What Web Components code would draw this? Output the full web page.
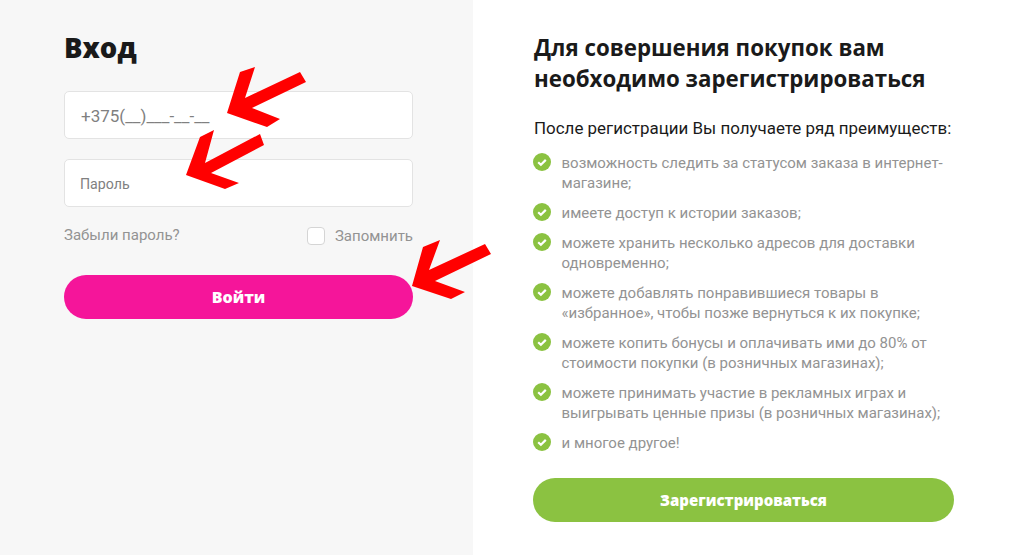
<!DOCTYPE html>
<html lang="ru">
<head>
<meta charset="utf-8">
<title>Вход</title>
<style>
html, body { margin: 0; padding: 0; background: #fff; }
body { font-family: Roboto, "Liberation Sans", sans-serif; width: 1015px; height: 555px; overflow: hidden; position: relative; }
</style>
</head>
<body>
<auth-page>
    <login-panel></login-panel>
    <register-panel>
        <benefit-item>возможность следить за статусом заказа в интернет-магазине;</benefit-item>
        <benefit-item>имеете доступ к истории заказов;</benefit-item>
        <benefit-item>можете хранить несколько адресов для доставки одновременно;</benefit-item>
        <benefit-item>можете добавлять понравившиеся товары в «избранное», чтобы позже вернуться к их покупке;</benefit-item>
        <benefit-item>можете копить бонусы и оплачивать ими до 80% от стоимости покупки (в розничных магазинах);</benefit-item>
        <benefit-item>можете принимать участие в рекламных играх и выигрывать ценные призы (в розничных магазинах);</benefit-item>
        <benefit-item>и многое другое!</benefit-item>
    </register-panel>
</auth-page>
<red-arrows></red-arrows>

<script>
class AuthPage extends HTMLElement {
    constructor() {
        super();
        this.attachShadow({ mode: "open" }).innerHTML = `
            <style>
                :host { display: flex; width: 1015px; height: 555px; }
            </style>
            <slot></slot>
        `;
    }
}

class PillButton extends HTMLElement {
    constructor() {
        super();
        this.attachShadow({ mode: "open" }).innerHTML = `
            <style>
                :host {
                    display: flex;
                    align-items: center;
                    justify-content: center;
                    box-sizing: border-box;
                    height: 44px;
                    border-radius: 22px;
                    background: var(--btn-color);
                    color: #fff;
                    font: 800 var(--btn-size, 15px)/1 "Open Sans", Roboto, sans-serif;
                }
            </style>
            <slot></slot>
        `;
    }
}

class TextField extends HTMLElement {
    constructor() {
        super();
        this.attachShadow({ mode: "open" }).innerHTML = `
            <style>
                :host {
                    display: flex;
                    align-items: center;
                    box-sizing: border-box;
                    height: 48px;
                    padding: 2px 16px 0;
                    background: #fff;
                    border: 1px solid #e3e3e3;
                    border-radius: 5px;
                    color: #808080;
                    font: 400 17px/1 Roboto, sans-serif;
                }
            </style>
            <slot></slot>
        `;
    }
}

class LoginPanel extends HTMLElement {
    constructor() {
        super();
        this.attachShadow({ mode: "open" }).innerHTML = `
            <style>
                :host {
                    display: flex;
                    flex-direction: column;
                    box-sizing: border-box;
                    width: 473px;
                    height: 555px;
                    padding: 30px 60px 0 64px;
                    background: #f7f7f7;
                }
                h1 {
                    margin: 0 0 25px;
                    font: 800 27.5px/36px "Open Sans", Roboto, sans-serif;
                    color: #1a1a1a;
                }
                .fields { display: flex; flex-direction: column; gap: 20px; }
                .options {
                    display: flex;
                    justify-content: space-between;
                    align-items: center;
                    height: 20px;
                    margin: 19px 0 29px;
                    color: #939393;
                    font-size: 15px;
                    font-family: Roboto, sans-serif;
                }
                .forgot { position: relative; top: -1px; }
                .remember { display: flex; align-items: center; gap: 10px; }
                .box {
                    width: 16px;
                    height: 16px;
                    background: #fff;
                    border: 1px solid #d5d5d5;
                    border-radius: 4px;
                }
                pill-button { --btn-color: #f5159a; --btn-size: 16px; }
            </style>
            <h1>Вход</h1>
            <div class="fields">
                <text-field>+375(__)___-__-__</text-field>
                <text-field style="font-size:14.2px;padding-left:15px">Пароль</text-field>
            </div>
            <div class="options">
                <span class="forgot">Забыли пароль?</span>
                <span class="remember"><span class="box"></span>Запомнить</span>
            </div>
            <pill-button>Войти</pill-button>
        `;
    }
}

class RegisterPanel extends HTMLElement {
    constructor() {
        super();
        this.attachShadow({ mode: "open" }).innerHTML = `
            <style>
                :host {
                    display: flex;
                    flex-direction: column;
                    box-sizing: border-box;
                    width: 542px;
                    height: 555px;
                    padding: 32px 61px 0 60px;
                }
                h2 {
                    margin: 0 0 24px 1px;
                    font: 700 22.3px/31px "Open Sans", Roboto, sans-serif;
                    color: #1a1a1a;
                }
                p {
                    margin: 0 0 15px 1px;
                    font: 400 16.95px/20px Roboto, sans-serif;
                    color: #1a1a1a;
                }
                .list { display: flex; flex-direction: column; gap: 10px; margin-bottom: 25px; }
                pill-button { --btn-color: #8bc241; }
            </style>
            <h2>Для совершения покупок вам необходимо зарегистрироваться</h2>
            <p>После регистрации Вы получаете ряд преимуществ:</p>
            <div class="list"><slot></slot></div>
            <pill-button>Зарегистрироваться</pill-button>
        `;
    }
}

class BenefitItem extends HTMLElement {
    constructor() {
        super();
        this.attachShadow({ mode: "open" }).innerHTML = `
            <style>
                :host {
                    display: flex;
                    gap: 10.5px;
                    color: #939393;
                    font: 400 15px/20px Roboto, sans-serif;
                }
                svg { flex: none; width: 18px; height: 18px; }
            </style>
            <svg viewBox="0 0 18 18">
                <circle cx="9" cy="9" r="9" fill="#8bc241"/>
                <path d="M5.2 9.2 L7.9 11.8 L12.8 6.9" fill="none" stroke="#fff" stroke-width="2.2"/>
            </svg>
            <span><slot></slot></span>
        `;
    }
}

// hand drawn arrows lying over the form
class RedArrows extends HTMLElement {
    constructor() {
        super();
        this.attachShadow({ mode: "open" }).innerHTML = `
            <style>
                :host { position: absolute; left: 0; top: 0; width: 1015px; height: 555px; pointer-events: none; }
                svg { display: block; }
            </style>
            <svg width="1015" height="555" viewBox="0 0 1015 555" fill="#ff0000">
                <polygon points="227,113 240,72 255,67 245,98 300,72 306,82 252,108 280,119 267,127"/>
                <polygon points="186,175 200,137 214,130 205,163 260,134 264,145 211,173 239,183 225,189"/>
                <polygon points="412,286 423,247 440,240 429,270 485,244 491,254 435,281 465,292 451,299"/>
            </svg>
        `;
    }
}

customElements.define("auth-page", AuthPage);
customElements.define("pill-button", PillButton);
customElements.define("text-field", TextField);
customElements.define("login-panel", LoginPanel);
customElements.define("register-panel", RegisterPanel);
customElements.define("benefit-item", BenefitItem);
customElements.define("red-arrows", RedArrows);
</script>
</body>
</html>
